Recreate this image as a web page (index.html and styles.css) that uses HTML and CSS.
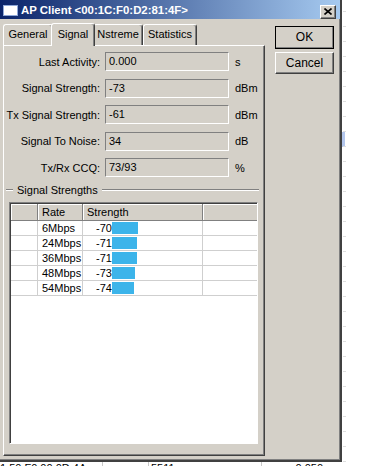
FILE: index.html
```html
<!DOCTYPE html>
<html>

<head>
  <link rel="stylesheet" href="styles.css">
</head>

<body>
  <div class="screen">
    <div class="top">
      <div class="window">
        <div class="titlebar">
          <svg class="app-icon" width="15" height="11" viewBox="0 0 15 11">
            <rect x="0.5" y="0.5" width="14" height="10" fill="#ffffff" stroke="#8fa8d8" />
          </svg>
          <span class="title">AP Client &lt;00:1C:F0:D2:81:4F&gt;</span>
          <div class="close">
            <svg width="8" height="7" viewBox="0 0 8 7">
              <path d="M0.5 0.5 L7.5 6.5 M7.5 0.5 L0.5 6.5" stroke="#000" stroke-width="1.6" />
            </svg>
          </div>
        </div>

        <div class="body">
          <div class="main">
            <div class="tabs">
              <div class="tab tab-general">General</div>
              <div class="tab tab-signal active">Signal</div>
              <div class="tab tab-nstreme">Nstreme</div>
              <div class="tab tab-stats">Statistics</div>
            </div>

            <div class="panel">
              <div class="fields">
                <div class="field-row">
                  <span class="label">Last Activity:</span>
                  <span class="box">0.000</span>
                  <span class="unit">s</span>
                </div>
                <div class="field-row">
                  <span class="label">Signal Strength:</span>
                  <span class="box">-73</span>
                  <span class="unit">dBm</span>
                </div>
                <div class="field-row">
                  <span class="label">Tx Signal Strength:</span>
                  <span class="box">-61</span>
                  <span class="unit">dBm</span>
                </div>
                <div class="field-row">
                  <span class="label">Signal To Noise:</span>
                  <span class="box">34</span>
                  <span class="unit">dB</span>
                </div>
                <div class="field-row">
                  <span class="label">Tx/Rx CCQ:</span>
                  <span class="box">73/93</span>
                  <span class="unit">%</span>
                </div>
              </div>

              <div class="group-title"><span>Signal Strengths</span></div>

              <div class="list">
                <div class="list-head">
                  <div class="th"></div>
                  <div class="th">Rate</div>
                  <div class="th">Strength</div>
                  <div class="th"></div>
                </div>
                <div class="list-body">
                  <div class="tr">
                    <div class="td"></div>
                    <div class="td">6Mbps</div>
                    <div class="td"><span class="dbm">-70</span><span class="bar" style="width: 26px"></span></div>
                    <div class="td"></div>
                  </div>
                  <div class="tr">
                    <div class="td"></div>
                    <div class="td">24Mbps</div>
                    <div class="td"><span class="dbm">-71</span><span class="bar" style="width: 25px"></span></div>
                    <div class="td"></div>
                  </div>
                  <div class="tr">
                    <div class="td"></div>
                    <div class="td">36Mbps</div>
                    <div class="td"><span class="dbm">-71</span><span class="bar" style="width: 25px"></span></div>
                    <div class="td"></div>
                  </div>
                  <div class="tr">
                    <div class="td"></div>
                    <div class="td">48Mbps</div>
                    <div class="td"><span class="dbm">-73</span><span class="bar" style="width: 23px"></span></div>
                    <div class="td"></div>
                  </div>
                  <div class="tr">
                    <div class="td"></div>
                    <div class="td">54Mbps</div>
                    <div class="td"><span class="dbm">-74</span><span class="bar" style="width: 22px"></span></div>
                    <div class="td"></div>
                  </div>
                </div>
              </div>
            </div>
          </div>

          <div class="buttons">
            <div class="btn default">OK</div>
            <div class="btn">Cancel</div>
          </div>
        </div>
      </div>

      <div class="side">
        <div class="marker"></div>
      </div>
    </div>

    <div class="backrow">
      <span class="bc mac">1:50:F0:00:0D:4A</span>
      <span class="bc"></span>
      <span class="bc">5511</span>
      <span class="bc num">0.050</span>
    </div>
  </div>
</body>

</html>
```

FILE: styles.css
```css
body {
  margin: 0;
  width: 368px;
  height: 466px;
  overflow: hidden;
  background: #ffffff;
  font-family: 'Liberation Sans', Arial, sans-serif;
  font-size: 11px;
  color: #000000;
}

.screen {
  display: flex;
  flex-direction: column;
}

.top {
  display: flex;
  height: 462px;
}

/* dialog window */
.window {
  width: 340px;
  height: 460px;
  background: #d4d0c8;
  border-right: 2px solid #404040;
  border-bottom: 2px solid #404040;
  box-shadow: inset -1px -1px #808080;
  display: flex;
  flex-direction: column;
}

.titlebar {
  height: 19px;
  background: linear-gradient(to right, #0a246a, #a6caf0);
  display: flex;
  align-items: center;
  padding-left: 3px;
  padding-right: 4px;
}

.app-icon {
  display: block;
  margin-top: 2px;
}

.title {
  color: #ffffff;
  font-weight: bold;
  font-size: 11.4px;
  margin-left: 3px;
  flex: 1;
}

.close {
  width: 14px;
  height: 12px;
  background: #d4d0c8;
  border: 1px solid;
  border-color: #ffffff #404040 #404040 #ffffff;
  box-shadow: inset -1px -1px #808080;
  display: flex;
  align-items: center;
  justify-content: center;
  margin-top: 4px;
}

.close svg {
  display: block;
}

.body {
  display: flex;
  padding: 3px 0 3px 3px;
}

.main {
  width: 262px;
  display: flex;
  flex-direction: column;
}

/* tabs */
.tabs {
  display: flex;
  align-items: flex-end;
  height: 23px;
}

.tab {
  box-sizing: border-box;
  height: 21px;
  line-height: 19px;
  text-align: center;
  border: 1px solid;
  border-bottom: none;
  border-color: #ffffff #404040 transparent #ffffff;
  box-shadow: inset -1px 0 #808080;
  border-radius: 3px 3px 0 0;
  position: relative;
}

.tab-general {
  width: 50px;
}

.tab-signal {
  width: 44px;
}

.tab-nstreme {
  width: 50px;
}

.tab-stats {
  width: 54px;
}

.tab.active {
  height: 23px;
  line-height: 20px;
  margin: 0 -2px -1px;
  background: #d4d0c8;
  z-index: 1;
}

.panel {
  height: 409px;
  border: 1px solid;
  border-color: #ffffff #404040 #404040 #ffffff;
  box-shadow: inset -1px -1px #808080;
  display: flex;
  flex-direction: column;
}

/* fields */
.fields {
  display: flex;
  flex-direction: column;
  gap: 7.5px;
  padding-top: 6px;
}

.field-row {
  display: flex;
  align-items: center;
  height: 19px;
}

.label {
  width: 96px;
  text-align: right;
}

.box {
  width: 119px;
  height: 17px;
  line-height: 17px;
  margin-left: 5px;
  padding-left: 3px;
  border: 1px solid;
  border-color: #808080 #ffffff #ffffff #808080;
}

.unit {
  margin-left: 6px;
}

/* group box */
.group-title {
  display: flex;
  align-items: center;
  height: 13px;
  margin: 6px 5px 0 2px;
}

.group-title::before,
.group-title::after {
  content: "";
  height: 1px;
  border-bottom: 1px solid #ffffff;
  background: #808080;
}

.group-title::before {
  width: 7px;
}

.group-title::after {
  flex: 1;
}

.group-title span {
  padding: 0 4px;
}

/* rate list */
.list {
  flex: 1;
  margin: 6px 6px 11px 5px;
  background: #ffffff;
  border: 1px solid;
  border-color: #808080 #ffffff #ffffff #808080;
  box-shadow: inset 1px 1px #404040;
  padding: 1px 0 0 1px;
}

.list-head,
.tr {
  display: grid;
  grid-template-columns: 27px 45px 120px 1fr;
}

.list-head {
  height: 16px;
  background: #d4d0c8;
  border-bottom: 1px solid #808080;
}

.th {
  line-height: 16px;
  padding-left: 4px;
  border-right: 1px solid #808080;
  box-shadow: inset 1px 1px #ffffff;
}

.th:first-child {
  padding-left: 0;
}

.th:last-child {
  border-right: none;
}

.tr {
  height: 15px;
}

.td {
  line-height: 14px;
  padding-left: 4px;
  border-right: 1px solid #cfcfcf;
  border-bottom: 1px solid #cfcfcf;
  display: flex;
  align-items: center;
}

.td:last-child {
  border-right: none;
}

.dbm {
  width: 25px;
  text-align: right;
}

.bar {
  height: 12px;
  background: #3cb4ea;
}

/* OK / Cancel */
.buttons {
  display: flex;
  flex-direction: column;
  gap: 3px;
  margin: 4px 0 0 10px;
  width: 59px;
}

.btn {
  height: 20px;
  line-height: 20px;
  text-align: center;
  background: #d4d0c8;
  border: 1px solid;
  border-color: #ffffff #404040 #404040 #ffffff;
  box-shadow: inset -1px -1px #808080;
  font-size: 12px;
}

.btn.default {
  height: 21px;
  outline: 1px solid #000000;
  outline-offset: -1px;
}

/* desktop behind the dialog */
.side {
  flex: 1;
  display: flex;
  flex-direction: column;
  position: relative;
}

.side::before {
  content: "";
  position: absolute;
  top: 11px;
  bottom: 0;
  left: 1px;
  width: 3px;
  background: repeating-linear-gradient(to bottom, #dedede 0 1px, transparent 1px 15px);
}

.marker {
  margin-top: 132px;
  width: 3px;
  height: 15px;
  background: #b3c6ec;
}

.backrow {
  display: grid;
  grid-template-columns: 102px 46px 113px 62px;
  line-height: 13px;
  white-space: nowrap;
}

.bc {
  border-left: 1px solid #c8c8c8;
  padding-left: 2px;
}

.bc.mac {
  border-left: none;
  padding-left: 0;
}

.bc.num {
  text-align: right;
}
```
